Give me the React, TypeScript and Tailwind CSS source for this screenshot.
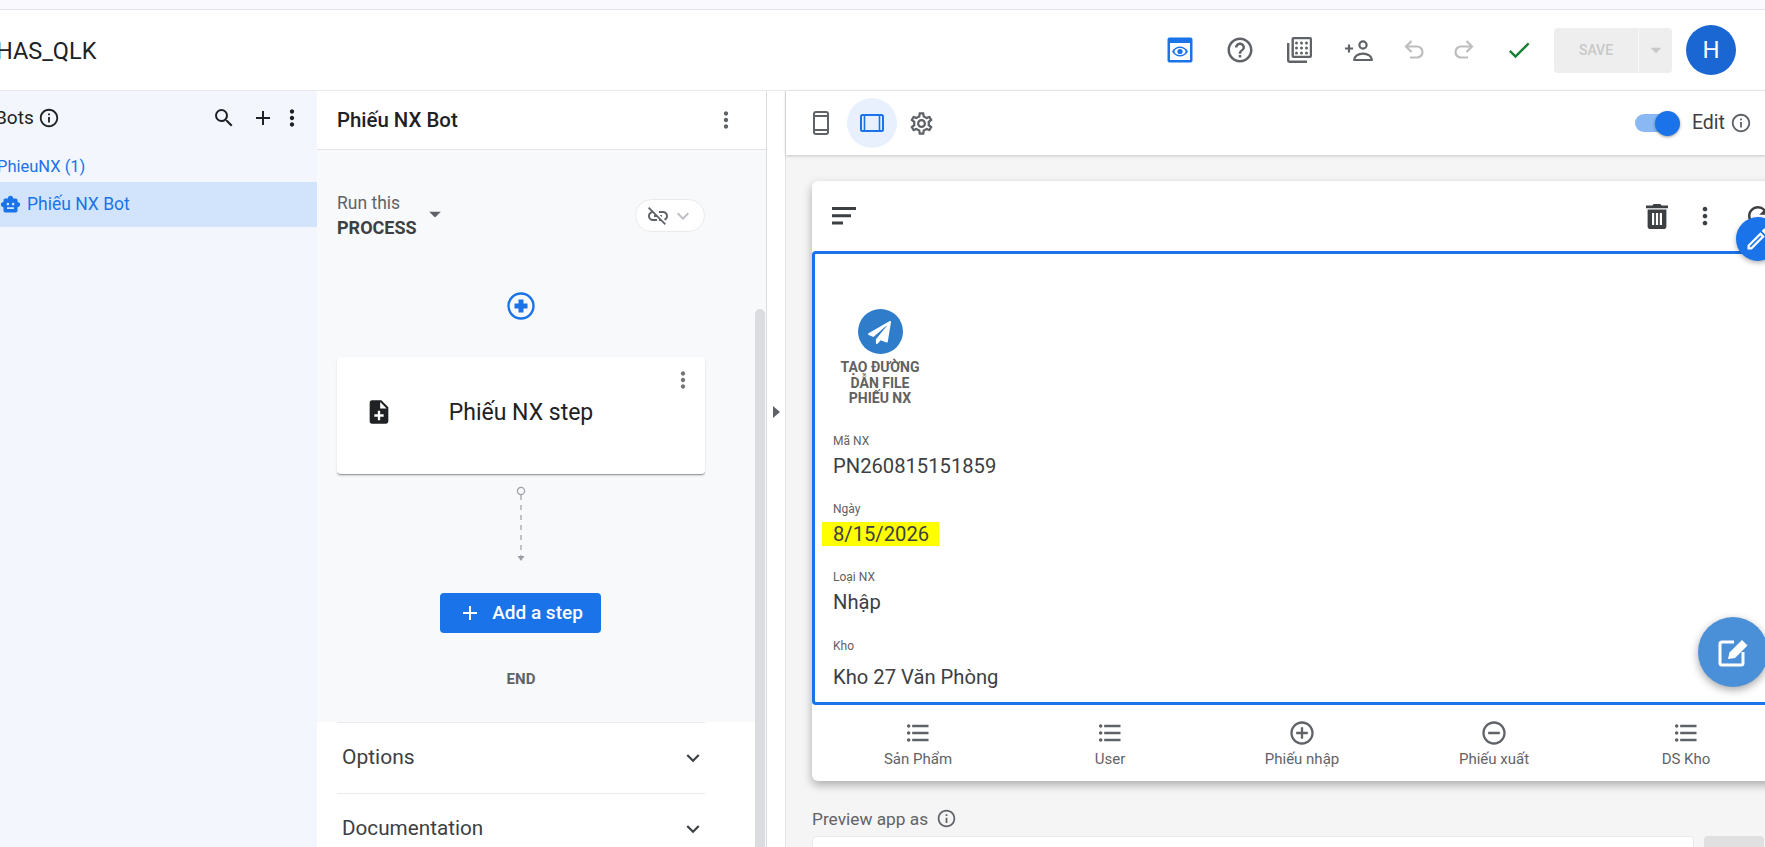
import React from "react";
import {
  MdHelpOutline,
  MdArrowDropDown,
  MdInfoOutline,
  MdSearch,
  MdAdd,
  MdMoreVert,
  MdSmartToy,
  MdLinkOff,
  MdExpandMore,
  MdCheck,
  MdNoteAdd,
  MdOutlineSettings,
  MdOutlineEdit,
  MdFormatListBulleted,
  MdAddCircleOutline,
  MdRemoveCircleOutline,
  MdRefresh,
} from "react-icons/md";
import { FaPaperPlane } from "react-icons/fa";

const fields = [
  { label: "Mã NX", value: "PN260815151859", gap: "mt-[5px]" },
  { label: "Ngày", value: "8/15/2026", gap: "mt-[5px]", marked: true },
  { label: "Loại NX", value: "Nhập", gap: "mt-[5px]" },
  { label: "Kho", value: "Kho 27 Văn Phòng", gap: "mt-[11px]" },
];

const navItems = [
  { label: "Sản Phẩm", Icon: MdFormatListBulleted },
  { label: "User", Icon: MdFormatListBulleted },
  { label: "Phiếu nhập", Icon: MdAddCircleOutline },
  { label: "Phiếu xuất", Icon: MdRemoveCircleOutline },
  { label: "DS Kho", Icon: MdFormatListBulleted },
];

// preview icon, blue phone shape with an eye
const PreviewIcon = () => (
  <svg width="26" height="26" viewBox="0 0 26 26">
    <rect x="0.5" y="0.5" width="25" height="25" rx="2" fill="#1a73e8" />
    <rect x="3" y="6" width="20" height="17" fill="#fff" />
    <path d="M5 14.5c2-3.6 5-5 8-5s6 1.4 8 5c-2 3.6-5 5-8 5s-6-1.4-8-5z" fill="#1a73e8" />
    <ellipse cx="13" cy="14.5" rx="5.5" ry="3.6" fill="#fff" />
    <circle cx="13" cy="14.5" r="2.6" fill="#1a73e8" />
  </svg>
);

const BulkIcon = () => (
  <svg width="26" height="26" viewBox="0 0 26 26" fill="#5f6368">
    <path d="M1 6h2.4v17.6H21V26H3.4A2.4 2.4 0 0 1 1 23.6z" />
    <path
      fillRule="evenodd"
      d="M7.5 0H24a2 2 0 0 1 2 2v17a2 2 0 0 1-2 2H7.5a2 2 0 0 1-2-2V2a2 2 0 0 1 2-2zm.4 2.2v16.6h15.9V2.2z"
    />
    {[6, 11, 16].map((y) =>
      [10.5, 15.5, 20.5].map((x) => <circle key={`${x}-${y}`} cx={x} cy={y} r="1.5" />),
    )}
  </svg>
);

const PersonPlusIcon = () => (
  <svg width="28" height="21" viewBox="0 0 28 21" fill="none" stroke="#5f6368" strokeWidth="2.2">
    <circle cx="18" cy="5" r="3.6" />
    <path d="M9.2 20a8.8 6.4 0 0 1 17.6 0z" strokeLinejoin="round" />
    <path d="M0 8.5h8M4 4.5v8" />
  </svg>
);

const UndoIcon = () => (
  <svg width="20" height="20" viewBox="0 0 20 20" fill="none" stroke="#bdbdbd" strokeWidth="2.2">
    <path d="M7.5 1 2 6.5 7.5 12" />
    <path d="M2 6.5h11a5.5 5.5 0 0 1 0 11H6" />
  </svg>
);

const RedoIcon = () => (
  <svg width="20" height="20" viewBox="0 0 20 20" fill="none" stroke="#bdbdbd" strokeWidth="2.2">
    <path d="M12.5 1 18 6.5 12.5 12" />
    <path d="M18 6.5H7a5.5 5.5 0 0 0 0 11h7" />
  </svg>
);

const PhoneIcon = () => (
  <svg width="16" height="24" viewBox="0 0 16 24" fill="none" stroke="#5f6368" strokeWidth="2">
    <rect x="1" y="1" width="14" height="22" rx="2" />
    <path d="M1 5h14M1 19h14" />
  </svg>
);

const TabletIcon = () => (
  <svg width="24" height="18" viewBox="0 0 24 18" fill="none" stroke="#1a73e8" strokeWidth="1.6">
    <rect x="1" y="1" width="22" height="16" rx="1.5" strokeWidth="2" />
    <path d="M4.5 1v16M19.5 1v16" />
  </svg>
);

const TrashIcon = () => (
  <svg width="22" height="25" viewBox="0 0 22 25" fill="#3c4043">
    <path d="M7.5 0h7l1 1.6H22v2.6H0V1.6h6.5z" />
    <path
      fillRule="evenodd"
      d="M1.6 5.6h18.8v16.6a2.8 2.8 0 0 1-2.8 2.8H4.4a2.8 2.8 0 0 1-2.8-2.8zM6 9v12h2.2V9zm3.9 0v12h2.2V9zm3.9 0v12H16V9z"
    />
  </svg>
);

const SortIcon = () => (
  <svg width="24" height="18" viewBox="0 0 24 18" fill="#3c4043">
    <path d="M0 0h24v3H0zM0 7.2h19v3H0zM0 14.4h11v3H0z" />
  </svg>
);

const FabEditIcon = () => (
  <svg width="32" height="32" viewBox="0 0 32 32" fill="none">
    <path d="M17 6H5a2 2 0 0 0-2 2v19a2 2 0 0 0 2 2h19a2 2 0 0 0 2-2V16" stroke="#fff" strokeWidth="3" />
    <path d="M11 23l1.5-6.5L25 4l5.500 5.500L18 22z" fill="#fff" />
  </svg>
);

const Connector = () => (
  <svg width="14" height="78" viewBox="0 0 14 78" fill="none" stroke="#9aa0a6">
    <circle cx="7" cy="5" r="3.6" strokeWidth="1.2" />
    <path d="M7 9v62" strokeWidth="1.2" strokeDasharray="5 5" />
    <path d="M3.5 70h7L7 75z" fill="#9aa0a6" stroke="none" />
  </svg>
);

const App: React.FC = () => {
  return (
    <div className="flex h-[847px] w-[1765px] flex-col overflow-hidden bg-white font-['Roboto',sans-serif] text-[#202124]">
      {/* Top strip */}
      <div className="h-[10px] shrink-0 border-b border-[#e3e3ea] bg-[#f9f9fe]" />

      {/* App header */}
      <div className="flex h-[81px] shrink-0 items-center justify-between border-b border-[#e8eaed] pr-[29px]">
        <div className="-ml-[4px] pt-[4px] text-[23.5px] leading-none text-[#202124]">HAS_QLK</div>
        <div className="flex items-center">
          <div className="flex w-[26px] justify-center">
            <PreviewIcon />
          </div>
          <MdHelpOutline className="ml-[32px] text-[#5f6368]" size={30} />
          <div className="ml-[31px]">
            <BulkIcon />
          </div>
          <div className="ml-[33px]">
            <PersonPlusIcon />
          </div>
          <div className="ml-[31.5px]">
            <UndoIcon />
          </div>
          <div className="ml-[30px]">
            <RedoIcon />
          </div>
          <MdCheck className="ml-[31px] text-[#188038]" size={28} />
          <div className="ml-[21px] flex h-[45px] w-[118px] items-center rounded-[4px] bg-[#eeeeee] text-[#c8c8c8]">
            <div className="flex h-full w-[85px] items-center justify-center border-r border-[#f8f8f8] text-[14px] font-medium">
              SAVE
            </div>
            <MdArrowDropDown className="ml-[4px]" size={26} />
          </div>
          <div className="ml-[14px] flex h-[50px] w-[50px] items-center justify-center rounded-full bg-[#1a66d2] text-[24px] text-white">
            H
          </div>
        </div>
      </div>

      <div className="flex min-h-0 flex-1">
        {/* Bots list */}
        <aside className="w-[317px] shrink-0 bg-[#f3f6fd]">
          <div className="flex h-[54px] items-center pr-[12px]">
            <span className="-ml-[5px] text-[19px]">Bots</span>
            <MdInfoOutline className="ml-[4px] text-[#202124]" size={22} />
            <div className="flex-1" />
            <MdSearch className="text-[#202124]" size={24} />
            <MdAdd className="ml-[15px] mr-[1px] text-[#202124]" size={24} />
            <MdMoreVert className="ml-[3px] text-[#202124]" size={26} />
          </div>
          <div className="-ml-[3px] mt-[9px] h-[26px] text-[16.5px] leading-[26px] text-[#1a73e8]">PhieuNX (1)</div>
          <div className="mt-[2px] flex h-[45px] items-center bg-[#d2e3fc] text-[17.5px] text-[#1a73e8]">
            <MdSmartToy className="shrink-0" size={21} />
            <span className="ml-[6px]">Phiếu NX Bot</span>
          </div>
        </aside>

        {/* Bot editor */}
        <section className="relative flex w-[449px] shrink-0 flex-col">
          <div className="flex h-[59px] shrink-0 items-center justify-between border-b border-[#e0e2e6] pl-[20px] pr-[27px]">
            <span className="text-[20.4px] font-medium">Phiếu NX Bot</span>
            <MdMoreVert className="text-[#5f6368]" size={26} />
          </div>
          <div className="flex h-[572px] w-[438px] shrink-0 flex-col bg-[#f8f9fa] pl-[20px]">
            <div className="mt-[42px] flex w-[368px] items-center">
              <div>
                <div className="text-[17.5px] leading-[22px] text-[#5f6368]">Run this</div>
                <div className="mt-[3px] text-[18px] font-bold leading-[22px] text-[#3c4043]">PROCESS</div>
              </div>
              <MdArrowDropDown className="-mt-[4px] ml-[4px] text-[#5f6368]" size={28} />
              <div className="flex-1" />
              <div className="flex h-[33px] w-[70px] items-center justify-center rounded-full border border-[#e8eaed] bg-white text-[#5f6368]">
                <MdLinkOff size={24} />
                <MdExpandMore className="ml-[1px] text-[#bdc1c6]" size={24} />
              </div>
            </div>

            <div className="flex w-[368px] flex-col items-center">
              <svg className="mt-[53px]" width="28" height="28" viewBox="0 0 28 28">
                <circle cx="14" cy="14" r="12.5" fill="none" stroke="#1a73e8" strokeWidth="2.4" />
                <path d="M11.500 7.500h5v4h4v5h-4v4h-5v-4h-4v-5h4z" fill="#1a73e8" />
              </svg>

              <div className="relative mt-[37px] flex h-[118px] w-[368px] items-center rounded-[4px] border-b border-[#9aa0a6] bg-white shadow-[0_1px_2px_rgba(60,64,67,0.2)]">
                <MdNoteAdd className="absolute left-[28px] top-[41px] text-[#202124]" size={28} />
                <div className="w-full pb-[4px] text-center text-[23px]">Phiếu NX step</div>
                <MdMoreVert className="absolute right-[9px] top-[10px] text-[#757575]" size={26} />
              </div>

              <div className="mt-[11px] leading-none">
                <Connector />
              </div>

              <button className="-ml-[1px] mt-[29px] flex h-[40px] w-[161px] items-center justify-center rounded-[4px] bg-[#1a73e8] text-[19px] font-medium text-white">
                <MdAdd size={24} />
                <span className="ml-[10px]">Add a step</span>
              </button>

              <div className="mt-[38px] text-[15px] font-bold leading-[16px] text-[#5f6368]">END</div>
            </div>
          </div>

          <div className="ml-[20px] w-[368px]">
            <div className="flex h-[71px] items-center justify-between border-t border-[#e8eaed] pb-[1px] pl-[5px]">
              <span className="text-[21px] text-[#3c4043]">Options</span>
              <MdExpandMore className="-mr-[1px] text-[#3c4043]" size={26} />
            </div>
            <div className="flex h-[71px] items-center justify-between border-t border-[#e8eaed] pb-[1px] pl-[5px]">
              <span className="text-[20.7px] text-[#3c4043]">Documentation</span>
              <MdExpandMore className="-mr-[1px] text-[#3c4043]" size={26} />
            </div>
          </div>

          {/* scrollbar */}
          <div className="absolute bottom-0 left-[438px] top-[59px] w-[11px] bg-[#f8f9fa]" />
          <div className="absolute bottom-0 left-[438px] top-[218px] w-[10px] rounded-t-[5px] bg-[#dadce0]" />
        </section>

        {/* Gutter */}
        <div className="flex w-[19px] shrink-0 items-center justify-center border-l border-[#dadce0] pb-[114px]">
          <div className="h-0 w-0 border-y-[6px] border-l-[7px] border-y-transparent border-l-[#5f6368]" />
        </div>

        {/* Preview */}
        <section className="relative flex min-w-0 flex-1 flex-col border-l border-[#e3e3e3] bg-[#f5f5f5]">
          <div className="flex h-[64px] shrink-0 items-center bg-white pl-[27px] pr-[13px] shadow-[0_1px_3px_rgba(0,0,0,0.2)]">
            <PhoneIcon />
            <div className="ml-[18px] flex h-[50px] w-[50px] items-center justify-center rounded-full bg-[#e8f0fe]">
              <TabletIcon />
            </div>
            <MdOutlineSettings className="ml-[11px] text-[#5f6368]" size={27} />
            <div className="flex-1" />
            <div className="relative h-[18px] w-[36px] rounded-full bg-[#8ab8f3]">
              <div className="absolute -right-[9px] -top-[3px] h-[25px] w-[25px] rounded-full bg-[#1a73e8] shadow-[0_1px_3px_rgba(0,0,0,0.4)]" />
            </div>
            <span className="ml-[21px] text-[19.5px] text-[#3c4043]">Edit</span>
            <MdInfoOutline className="ml-[5px] text-[#5f6368]" size={22} />
          </div>

          <div className="ml-[26px] mt-[26px] w-[984px] shrink-0 rounded-[6px] bg-white shadow-[0_4px_10px_rgba(0,0,0,0.3)]">
            <div className="flex h-[70px] items-center pl-[20px] pr-[16px]">
              <SortIcon />
              <div className="flex-1" />
              <TrashIcon />
              <MdMoreVert className="ml-[23px] text-[#3c4043]" size={28} />
              <MdRefresh className="ml-[24px] mr-[7px] text-[#3c4043]" size={30} />
            </div>
            <div className="h-[454px] rounded-[4px] border-[3px] border-[#1a73e8] bg-white pl-[18px]">
              <div className="mt-[55px] flex w-[94px] flex-col items-center text-center">
                <div className="flex h-[45px] w-[45px] items-center justify-center rounded-full bg-[#2f7ccb] pr-[2px] pt-[1px] text-white">
                  <FaPaperPlane size={23} />
                </div>
                <div className="mt-[6px] w-[94px] text-[14px] font-bold leading-[15.5px] text-[#616161]">
                  TẠO ĐƯỜNG DẪN FILE PHIẾU NX
                </div>
              </div>
              <div className="mt-[26px]">
                {fields.map((f) => (
                  <div key={f.label} className="h-[68.4px]">
                    <div className="text-[12px] leading-[16px] text-[#616161]">{f.label}</div>
                    <div className={`${f.gap} text-[20.2px] leading-[24px] text-[#3c4043]`}>
                      {f.marked ? (
                        <span className="-ml-[11px] inline-block bg-[#ffff00] pl-[11px] pr-[10px]">{f.value}</span>
                      ) : (
                        f.value
                      )}
                    </div>
                  </div>
                ))}
              </div>
            </div>
            <div className="flex h-[76px] pl-[10px]">
              {navItems.map(({ label, Icon }) => (
                <div key={label} className="flex w-[192px] flex-col items-center pt-[14px] text-[#5f6368]">
                  <Icon size={28} />
                  <span className="mt-[3px] text-[15px] leading-[18px]">{label}</span>
                </div>
              ))}
            </div>
          </div>

          <div className="ml-[26px] mt-[27px] flex shrink-0 items-center text-[17.3px] leading-[20px] text-[#5f6368]">
            Preview app as
            <MdInfoOutline className="ml-[8px]" size={21} />
          </div>
          <div className="ml-[26px] mt-[7px] flex shrink-0">
            <div className="h-[40px] w-[882px] rounded-[4px] border border-[#e8eaed] bg-white" />
            <div className="ml-[10px] h-[40px] w-[60px] rounded-[4px] bg-[#e0e0e0]" />
          </div>

          {/* floating edit buttons */}
          <div className="absolute left-[950px] top-[126px] flex h-[44px] w-[44px] items-center justify-center rounded-full bg-[#1a73e8] text-white shadow-[0_2px_5px_rgba(0,0,0,0.3)]">
            <MdOutlineEdit size={28} />
          </div>
          <div className="absolute left-[912px] top-[526px] flex h-[70px] w-[70px] items-center justify-center rounded-full bg-[#4a90d9] shadow-[0_3px_8px_rgba(0,0,0,0.35)]">
            <FabEditIcon />
          </div>
        </section>
      </div>
    </div>
  );
};

export default App;
